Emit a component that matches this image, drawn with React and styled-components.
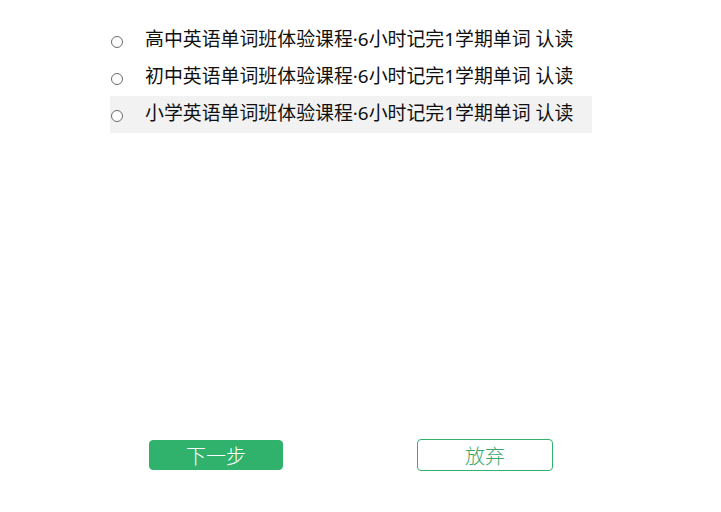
import React, { useState } from 'react';
import styled, { createGlobalStyle } from 'styled-components';

const GlobalStyle = createGlobalStyle`
  html, body {
    margin: 0;
    padding: 0;
    background: #fff;
  }

  body {
    font-family: "Noto Sans", "Noto Sans CJK SC", sans-serif;
    color: #111;
  }
`;

const Page = styled.div`
  width: 721px;
  height: 512px;
  padding: 22px 0 0 110px;
  box-sizing: border-box;
`;

const OptionList = styled.ul`
  width: 482px;
  margin: 0;
  padding: 0;
  list-style: none;
`;

const Option = styled.li`
  display: flex;
  align-items: center;
  height: 37px;
  background-color: ${(p) => (p.$hover ? '#f2f2f2' : 'transparent')};
  cursor: pointer;
`;

const Radio = styled.span`
  width: 10px;
  height: 10px;
  margin: 2px 22px 0 1px;
  border: 1px solid #6b6b6b;
  border-radius: 50%;
  background: #fff;
  flex-shrink: 0;
`;

const Label = styled.span`
  margin-bottom: 3px;
  font-family: "Noto Sans", "Noto Sans CJK SC", sans-serif;
  font-size: 18.9px;
  line-height: 1;
  white-space: nowrap;
`;

const Actions = styled.div`
  display: flex;
  gap: 134px;
  margin-top: 307px;
  padding-left: 39px;
`;

const Button = styled.button`
  display: flex;
  align-items: center;
  justify-content: center;
  width: ${(p) => (p.$ghost ? '136px' : '134px')};
  height: ${(p) => (p.$ghost ? '32px' : '30px')};
  margin-top: ${(p) => (p.$ghost ? '-1px' : '0')};
  padding: 0;
  border: 1px solid #30b26c;
  border-radius: 4px;
  background-color: ${(p) => (p.$ghost ? '#fff' : '#30b26c')};
  color: ${(p) => (p.$ghost ? '#3aa86c' : '#fff')};
  font-family: "Noto Sans CJK SC", sans-serif;
  font-size: 20px;
  font-weight: 300;
  cursor: pointer;
`;

const courses = [
  '高中英语单词班体验课程·6小时记完1学期单词 认读',
  '初中英语单词班体验课程·6小时记完1学期单词 认读',
  '小学英语单词班体验课程·6小时记完1学期单词 认读',
];

export default function App() {
  const [hover] = useState(2);

  return (
    <>
      <GlobalStyle />
      <Page>
        <OptionList>
          {courses.map((v, i) => (
            <Option key={i} $hover={hover === i}>
              <Radio />
              <Label>{v}</Label>
            </Option>
          ))}
        </OptionList>
        <Actions>
          <Button>下一步</Button>
          <Button $ghost>放弃</Button>
        </Actions>
      </Page>
    </>
  );
}
